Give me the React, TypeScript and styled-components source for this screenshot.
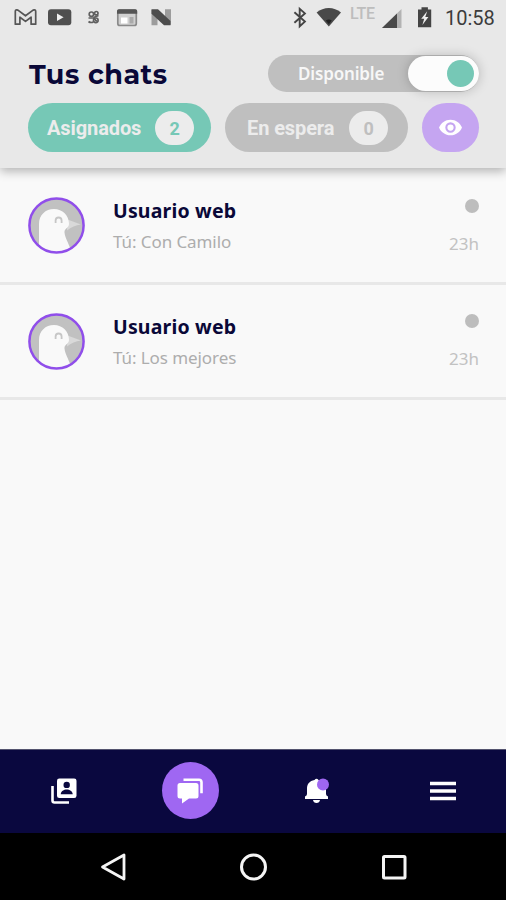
import React from 'react';
import styled, { createGlobalStyle } from 'styled-components';

const GlobalStyle = createGlobalStyle`
  * { box-sizing: border-box; }
  body { margin: 0; background: #f9f9f9; }
  button { border: 0; padding: 0; font: inherit; color: inherit; background: none; }
`;

const Screen = styled.div`
  width: 506px;
  height: 900px;
  display: flex;
  flex-direction: column;
  overflow: hidden;
  background: #f9f9f9;
  font-family: 'Noto Sans', sans-serif;
`;

const Header = styled.header`
  height: 168px;
  flex: none;
  background: #e8e8e8;
  box-shadow: 0 3px 10px rgba(0, 0, 0, 0.3);
  z-index: 1;
`;

const StatusBar = styled.div`
  height: 36px;
  padding: 0 11px 0 14px;
  display: flex;
  justify-content: space-between;
`;

const StatusIcons = styled.svg`
  width: 160px;
  height: 36px;
`;

const StatusRight = styled.div`
  display: flex;
`;

const SignalIcons = styled.svg`
  width: 56px;
  height: 36px;
`;

const PowerIcons = styled.svg`
  width: 64px;
  height: 36px;
`;

const Lte = styled.span`
  width: 32px;
  padding-left: 1px;
  font: 500 16px/28px Roboto, sans-serif;
  letter-spacing: -0.2px;
  color: #bdbdbd;
`;

const Clock = styled.time`
  width: 50px;
  font: 400 20px/37px Roboto, sans-serif;
  color: #3c3c3c;
  white-space: nowrap;
`;

const TitleRow = styled.div`
  height: 37px;
  margin: 19px 27px 0 29px;
  display: flex;
  justify-content: space-between;
  align-items: center;
`;

const Title = styled.h1`
  margin: 0;
  padding-top: 2px;
  font: 700 27px/37px Montserrat, Inter, sans-serif;
  letter-spacing: 0.5px;
  color: #0a0838;
  white-space: nowrap;
`;

const Availability = styled.button`
  width: 211px;
  height: 37px;
  border-radius: 19px;
  background: #bfbfbf;
  display: flex;
  align-items: center;
  justify-content: space-between;
  padding-left: 30px;
`;

const AvailabilityLabel = styled.span`
  font: 600 17px/37px 'Noto Sans', sans-serif;
  letter-spacing: -0.15px;
  color: #f7f7f7;
`;

const Switch = styled.span`
  width: 71px;
  height: 35px;
  border-radius: 18px;
  padding: 0 5px;
  background: #fcfcfc;
  box-shadow: 0 0 12px rgba(0, 0, 0, 0.22);
  display: flex;
  justify-content: flex-end;
  align-items: center;
`;

const Knob = styled.span`
  width: 27px;
  height: 27px;
  border-radius: 50%;
  background: #76c8b6;
`;

const Tabs = styled.nav`
  margin: 11px 27px 0 28px;
  display: grid;
  grid-template-columns: 183px 183px 57px;
  justify-content: space-between;
  height: 49px;
`;

const Tab = styled.button<{ $waiting?: boolean }>`
  border-radius: 25px;
  background: ${(p) => (p.$waiting ? '#bfbfbf' : '#76c8b6')};
  display: flex;
  align-items: center;
  justify-content: space-between;
  padding: ${(p) => (p.$waiting ? '1px 20px 0 22px' : '1px 17px 0 19px')};
  font: 700 20px/48px Roboto, sans-serif;
  letter-spacing: -0.1px;
  color: #ececec;
`;

const Count = styled.span<{ $waiting?: boolean }>`
  width: 39px;
  height: 34px;
  border-radius: 17px;
  background: #ececec;
  color: ${(p) => (p.$waiting ? '#bfbfbf' : '#76c8b6')};
  font-size: 18px;
  line-height: 36px;
  text-align: center;
`;

const EyeButton = styled.button`
  border-radius: 25px;
  background: #c5a5f1;
  display: flex;
  align-items: center;
  justify-content: center;
`;

const ChatList = styled.main`
  flex: 1;
  padding-top: 1px;
`;

const ChatRow = styled.article`
  height: 115.5px;
  padding: 28px 27px 0 28px;
  border-bottom: 3px solid #e8e8e8;
  display: flex;
`;

const AvatarIcon = styled.svg`
  width: 57px;
  height: 57px;
  flex: none;
`;

const ChatText = styled.div`
  margin-left: 28px;
  flex: 1;
  white-space: nowrap;
`;

const Name = styled.h2`
  margin: 0;
  font: 700 19.5px/28px 'Noto Sans', sans-serif;
  letter-spacing: 0.17px;
  color: #0a0838;
`;

const Message = styled.p`
  margin: 2.4px 0 0;
  font: 400 17px/29px 'Noto Sans', sans-serif;
  letter-spacing: -0.08px;
  color: #adadad;
`;

const ChatMeta = styled.div`
  display: flex;
  flex-direction: column;
  align-items: flex-end;
  padding-top: 1.7px;
`;

const Presence = styled.i`
  width: 14px;
  height: 14px;
  border-radius: 50%;
  background: #bdbdbd;
`;

const Age = styled.span`
  margin-top: 16px;
  font: 400 17px/29px 'Noto Sans', sans-serif;
  color: #c2c2c2;
`;

const BottomNav = styled.nav`
  height: 84px;
  flex: none;
  background: #0a083f;
  border-top: 1px solid #54536f;
  padding: 0 0 2px 1px;
  display: grid;
  grid-template-columns: repeat(4, 1fr);
  place-items: center;
`;

const NavItem = styled.button<{ $active?: boolean }>`
  width: 57px;
  height: 57px;
  border-radius: 50%;
  background: ${(p) => (p.$active ? '#9f67f2' : 'transparent')};
  display: grid;
  place-items: center;
`;

const Icon = styled.svg<{ $size: number }>`
  width: ${(p) => p.$size}px;
  height: ${(p) => p.$size}px;
  display: block;
`;

const SystemNav = styled.nav`
  height: 67px;
  flex: none;
  background: #000;
  display: flex;
  justify-content: center;
  align-items: center;
  gap: 110.5px;
`;

function NotificationIcons() {
  return (
    <StatusIcons viewBox="14 0 160 36">
      <path d="M15.3 24.2V11.500q0-2.200 2.600-1.400l7.600 5.700 7.600-5.700q2.600-.8 2.600 1.400v12.700h-4.600v-7l-5.600 4.200-5.600-4.200v7z" fill="#e4e4e4" stroke="#555" strokeWidth="1.700" strokeLinejoin="round" />
      <rect x="48" y="9.300" width="23.300" height="16" rx="3" fill="#4f4f4f" />
      <path d="M57 13.500v7.500l6.600-3.700z" fill="#efefef" />
      <g fill="none" stroke="#606060" strokeWidth="1.700">
        <circle cx="91.400" cy="14.200" r="2.200" />
        <circle cx="96.300" cy="13.200" r="1.700" />
        <path d="M88.500 18h4.500c2 0 2 3 4 3M88.500 21.500q2 1.700 5 .5M93.500 17.500l5-2" />
        <circle cx="95.800" cy="20.300" r="2.300" />
      </g>
      <rect x="117.800" y="10" width="18.500" height="15.500" rx="2" fill="#d0d0d0" stroke="#8a8a8a" strokeWidth="1.700" />
      <path d="M117 11q0-1.800 1.800-1.800h16.600q1.800 0 1.800 1.800v2.700H117z" fill="#555" />
      <path d="M121 17.500h6.500v6H121z" fill="#fff" />
      <path d="M129.500 17h4v6.500h-4z" fill="#aaa" />
      <path d="M151.500 10h6v15.300h-6zM165 9.300h6v15.500h-6z" fill="#9c9c9c" />
      <path d="M151.500 9.300h6.500L170.500 21v4.300H164L151.500 13.800z" fill="#4c4c4c" />
    </StatusIcons>
  );
}

function StatusRightIcons() {
  return (
    <StatusRight>
      <SignalIcons viewBox="293 0 56 36">
        <path d="M294.400 12.200l10.500 9.400-5.200 4.700V8.900l5.200 4.500-10.500 9.300" fill="none" stroke="#444" strokeWidth="1.900" />
        <path d="M316.600 12.400c7-6 17.400-6 24.400 0l-12.200 14.200z" fill="#494949" />
        <path d="M325.800 20.500q3-2.200 6 0l-3 3.700z" fill="#222" />
      </SignalIcons>
      <Lte>LTE</Lte>
      <PowerIcons viewBox="381 0 64 36">
        <path d="M382 28L401.500 9v19z" fill="#b3b3b3" />
        <path d="M382 28L397 13.500V28z" fill="#494949" />
        <path d="M418 9.500h3.500V7.300h6.400v2.200h3.300V27.200H418z" fill="#444" />
        <path d="M427.200 11.200l-6 7.500h3l-1.800 6.200 6-7.800h-3.100z" fill="#eee" />
      </PowerIcons>
      <Clock>10:58</Clock>
    </StatusRight>
  );
}

function Avatar() {
  return (
    <AvatarIcon viewBox="0 0 57 57">
      <circle cx="28.500" cy="28.500" r="27" fill="#c1c1c1" />
      <path d="M39.500 22.500L53 27.500q-8 1-14 6z" fill="#d9d9d9" />
      <path d="M11 50V27C11 18 17.500 12 26 12 34.500 12 41 18.500 41 27c0 4-5 4.500-4.500 8.500C37 41 40.500 46 42.500 52 32 57.500 18 57.500 11 50z" fill="#f9f9f9" />
      <path d="M27.600 26v-2.500c0-4 6-4 6 0V26" fill="none" stroke="#c6c6c6" strokeWidth="1.800" />
      <circle cx="28.500" cy="28.500" r="27.100" fill="none" stroke="#904eea" strokeWidth="2.500" />
    </AvatarIcon>
  );
}

const chats = [
  { id: 1, name: 'Usuario web', message: 'Tú: Con Camilo', age: '23h' },
  { id: 2, name: 'Usuario web', message: 'Tú: Los mejores', age: '23h' },
];

export default function App() {
  return (
    <Screen>
      <GlobalStyle />
      <Header>
        <StatusBar>
          <NotificationIcons />
          <StatusRightIcons />
        </StatusBar>
        <TitleRow>
          <Title>Tus chats</Title>
          <Availability>
            <AvailabilityLabel>Disponible</AvailabilityLabel>
            <Switch><Knob /></Switch>
          </Availability>
        </TitleRow>
        <Tabs>
          <Tab>Asignados<Count>2</Count></Tab>
          <Tab $waiting>En espera<Count $waiting>0</Count></Tab>
          <EyeButton aria-label="Ver">
            <Icon $size={25} viewBox="0 0 24 24">
              <path d="M12 4.500C7 4.500 2.730 7.610 1 12c1.730 4.390 6 7.500 11 7.500s9.270-3.110 11-7.500c-1.730-4.390-6-7.500-11-7.500z" fill="#fff" />
              <circle cx="12" cy="12" r="4" fill="#fff" stroke="#c5a5f1" strokeWidth="2" />
            </Icon>
          </EyeButton>
        </Tabs>
      </Header>
      <ChatList>
        {chats.map((chat) => (
          <ChatRow key={chat.id}>
            <Avatar />
            <ChatText>
              <Name>{chat.name}</Name>
              <Message>{chat.message}</Message>
            </ChatText>
            <ChatMeta>
              <Presence />
              <Age>{chat.age}</Age>
            </ChatMeta>
          </ChatRow>
        ))}
      </ChatList>
      <BottomNav>
        <NavItem aria-label="Contactos">
          <Icon $size={26} viewBox="0 0 26 26">
            <path d="M1.500 8v14.500q0 2 2 2H18" fill="none" stroke="#fff" strokeWidth="2.600" />
            <rect x="6" y="0.500" width="19.500" height="19.500" rx="2.300" fill="#fff" />
            <circle cx="15.700" cy="6.900" r="3.200" fill="#0a083f" />
            <path d="M9.700 16.200c.5-6.300 11.500-6.300 12 0z" fill="#0a083f" />
          </Icon>
        </NavItem>
        <NavItem $active aria-label="Chats">
          <Icon $size={26} viewBox="0 0 26 26">
            <path d="M6.500 1.700h15.500q2.500 0 2.500 2.500v11" fill="none" stroke="#fff" strokeWidth="2.600" />
            <path d="M3 5h16q2.500 0 2.500 2.500V18q0 2.500-2.500 2.500h-7L5 25.500v-5H3Q.5 20.500.5 18V7.500Q.5 5 3 5z" fill="#fff" />
          </Icon>
        </NavItem>
        <NavItem aria-label="Notificaciones">
          <Icon $size={26} viewBox="0 0 26 26">
            <path d="M10.500 2Q12.500-.7 14.500 2c5 1 7.500 4 7.500 8.500V16q0 1.500 2 2.500v2.500H1v-2.500q2-1 2-2.500v-5.500C3 6 5.500 3 10.500 2zM9 22h7q-.5 3-3.500 3T9 22z" fill="#fff" />
            <circle cx="19" cy="6.500" r="6" fill="#9f67f2" />
          </Icon>
        </NavItem>
        <NavItem aria-label="Menú">
          <Icon $size={26} viewBox="0 0 26 26">
            <path d="M0 5.500h26M0 13h26M0 20.500h26" stroke="#fff" strokeWidth="3.700" />
          </Icon>
        </NavItem>
      </BottomNav>
      <SystemNav>
        <Icon $size={30} viewBox="0 0 30 30">
          <path d="M26 3v24L4.500 15z" fill="none" stroke="#f5f5f5" strokeWidth="2.800" strokeLinejoin="round" />
        </Icon>
        <Icon $size={30} viewBox="0 0 30 30">
          <circle cx="15.500" cy="15" r="12" fill="none" stroke="#f5f5f5" strokeWidth="3" />
        </Icon>
        <Icon $size={30} viewBox="0 0 30 30">
          <rect x="4.500" y="4.500" width="21.500" height="21.500" rx="1" fill="none" stroke="#f5f5f5" strokeWidth="3" />
        </Icon>
      </SystemNav>
    </Screen>
  );
}
